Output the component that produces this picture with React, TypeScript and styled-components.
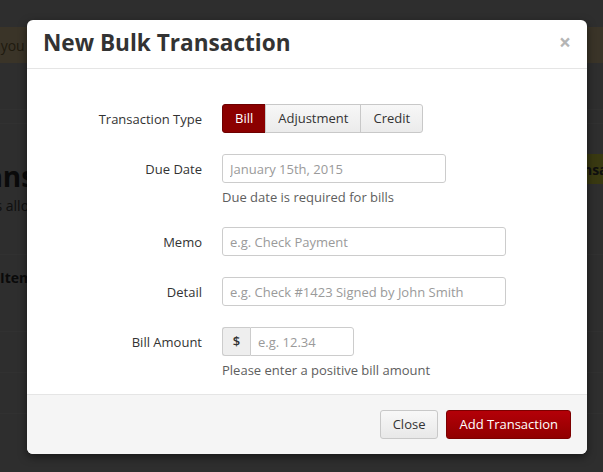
import React from "react";
import styled, { createGlobalStyle } from "styled-components";

const GlobalStyle = createGlobalStyle`
    html, body {
        margin: 0;
        padding: 0;
    }
    body {
        font-family: "Open Sans", "Liberation Sans", sans-serif;
        font-size: 13px;
        color: #333;
    }
    * {
        box-sizing: border-box;
    }
`;

const App = () => {
    return (
        <Page>
            <GlobalStyle />
            <PageInner>
                <Alert>Thank you</Alert>
                <Nav />
                <SubNav />
                <PageHead>
                    <div>
                        <PageTitle>Transactions</PageTitle>
                        <PageText>Entries allow you to bill many residents at once.</PageText>
                    </div>
                    <GreenButton>New Transaction</GreenButton>
                </PageHead>
                <TableHead>Item</TableHead>
                <TableRow />
                <TableRow />
            </PageInner>

            <Overlay />

            <Modal>
                <Header>
                    <Title>New Bulk Transaction</Title>
                    <CloseX>×</CloseX>
                </Header>
                <Body>
                    <Group>
                        <Label>Transaction Type</Label>
                        <Control>
                            <BtnGroup>
                                <SegBtn $active>Bill</SegBtn>
                                <SegBtn>Adjustment</SegBtn>
                                <SegBtn>Credit</SegBtn>
                            </BtnGroup>
                        </Control>
                    </Group>
                    <Group>
                        <Label>Due Date</Label>
                        <Control>
                            <Input $width={224} placeholder="January 15th, 2015" />
                            <Help>Due date is required for bills</Help>
                        </Control>
                    </Group>
                    <Group>
                        <Label>Memo</Label>
                        <Control>
                            <Input $width={284} placeholder="e.g. Check Payment" />
                        </Control>
                    </Group>
                    <Group>
                        <Label>Detail</Label>
                        <Control>
                            <Input $width={284} placeholder="e.g. Check #1423 Signed by John Smith" />
                        </Control>
                    </Group>
                    <Group>
                        <Label>Bill Amount</Label>
                        <Control>
                            <InputGroup>
                                <Addon>$</Addon>
                                <Input $width={104} $joined placeholder="e.g. 12.34" />
                            </InputGroup>
                            <Help>Please enter a positive bill amount</Help>
                        </Control>
                    </Group>
                </Body>
                <Footer>
                    <Button>Close</Button>
                    <Button $primary>Add Transaction</Button>
                </Footer>
            </Modal>
        </Page>
    )
}

const Page = styled.div`
    position: relative;
    width: 603px;
    height: 472px;
    overflow: hidden;
    background: #9a9a9a;
`

const PageInner = styled.div`
    margin-left: -58px;
    width: 728px;
    padding-top: 27px;
`

const Alert = styled.div`
    display: flex;
    align-items: center;
    height: 36px;
    padding: 0 15px;
    background: #c3ae87;
    color: #6a5a33;
    font-size: 14px;
`

const Nav = styled.div`
    height: 47px;
    border-bottom: 1px solid #a6a6a6;
`

const SubNav = styled.div`
    height: 14px;
    border-bottom: 1px solid #a6a6a6;
`

const PageHead = styled.div`
    display: flex;
    justify-content: space-between;
    align-items: flex-start;
    height: 131px;
    padding: 30px 15px 0;
    border-bottom: 1px solid #a6a6a6;
`

const PageTitle = styled.h1`
    margin: 5px 0 0;
    font-size: 28px;
    line-height: 34px;
    color: #222;
`

const PageText = styled.p`
    margin: 3px 0 0;
    font-size: 14px;
    line-height: 20px;
    color: #333;
`

const GreenButton = styled.div`
    display: flex;
    align-items: center;
    height: 30px;
    padding: 0 12px;
    background: #c0c03a;
    color: #333;
    font-weight: 700;
    font-size: 14px;
`

const TableHead = styled.div`
    height: 77px;
    padding: 13px 15px 0 58px;
    font-weight: 700;
    font-size: 14px;
    color: #222;
    border-bottom: 1px solid #a6a6a6;
`

const TableRow = styled.div`
    height: 41px;
    border-bottom: 1px solid #a6a6a6;
`

const Overlay = styled.div`
    position: absolute;
    inset: 0;
    background: rgba(0, 0, 0, 0.7);
`

const Modal = styled.div`
    position: absolute;
    top: 20px;
    left: 27px;
    width: 560px;
    background: #fff;
    border-radius: 6px;
    overflow: hidden;
    box-shadow: 0 3px 9px rgba(0, 0, 0, 0.5);
`

const Header = styled.div`
    display: flex;
    align-items: center;
    justify-content: space-between;
    height: 49px;
    padding: 0 16px;
    border-bottom: 1px solid #e5e5e5;
`

const Title = styled.h4`
    margin: -2px 0 0;
    font-size: 22.6px;
    font-weight: 700;
    line-height: 1.1;
    color: #333;
`

const CloseX = styled.span`
    font-size: 21px;
    font-weight: 700;
    line-height: 1;
    color: #b5b5b5;
    margin-top: -4px;
`

const Body = styled.div`
    padding: 35px 20px 15px 0;
`

const Group = styled.div`
    display: grid;
    grid-template-columns: 175px 1fr;
    align-items: start;
    column-gap: 20px;
    margin-bottom: 21px;

    &:last-child {
        margin-bottom: 0;
    }
`

const Label = styled.label`
    height: 29px;
    padding-top: 1px;
    text-align: right;
    line-height: 28px;
    color: #333;
`

const Control = styled.div`
    display: flex;
    flex-direction: column;
    align-items: flex-start;
`

const BtnGroup = styled.div`
    display: flex;
`

const SegBtn = styled.div<{ $active?: boolean }>`
    height: 29px;
    line-height: 27px;
    padding: 0 12px;
    border: 1px solid ${p => p.$active ? "#6e0000" : "#c8c8c8"};
    margin-left: -1px;
    background: ${p => p.$active ? "#8b0000" : "linear-gradient(#f7f7f7, #ebebeb)"};
    color: ${p => p.$active ? "#fff" : "#333"};

    &:first-child {
        margin-left: 0;
        border-radius: 3px 0 0 3px;
    }
    &:last-child {
        border-radius: 0 3px 3px 0;
    }
`

const Input = styled.input<{ $width: number; $joined?: boolean }>`
    width: ${p => p.$width}px;
    height: 29px;
    padding: 0 7px;
    border: 1px solid #ccc;
    border-radius: ${p => p.$joined ? "0 3px 3px 0" : "3px"};
    font-family: inherit;
    font-size: 13px;
    color: #333;
    outline: none;

    &::placeholder {
        color: #9a9a9a;
    }
`

const InputGroup = styled.div`
    display: flex;
`

const Addon = styled.span`
    width: 28px;
    height: 29px;
    line-height: 27px;
    text-align: center;
    border: 1px solid #ccc;
    border-right: none;
    border-radius: 3px 0 0 3px;
    background: #eee;
    color: #333;
    font-weight: 600;
`

const Help = styled.div`
    margin-top: 5px;
    line-height: 18px;
    color: #5e5e5e;
`

const Footer = styled.div`
    display: flex;
    justify-content: flex-end;
    gap: 8px;
    padding: 15px 16px;
    border-top: 1px solid #e5e5e5;
    background: #f5f5f5;
`

const Button = styled.div<{ $primary?: boolean }>`
    height: 29px;
    line-height: 27px;
    padding: 0 12px;
    border-radius: 3px;
    border: 1px solid ${p => p.$primary ? "#7d0000" : "#c8c8c8"};
    background: ${p => p.$primary ? "linear-gradient(#b40008, #900000)" : "linear-gradient(#f8f8f8, #e8e8e8)"};
    color: ${p => p.$primary ? "#fff" : "#333"};
`

export default App;
